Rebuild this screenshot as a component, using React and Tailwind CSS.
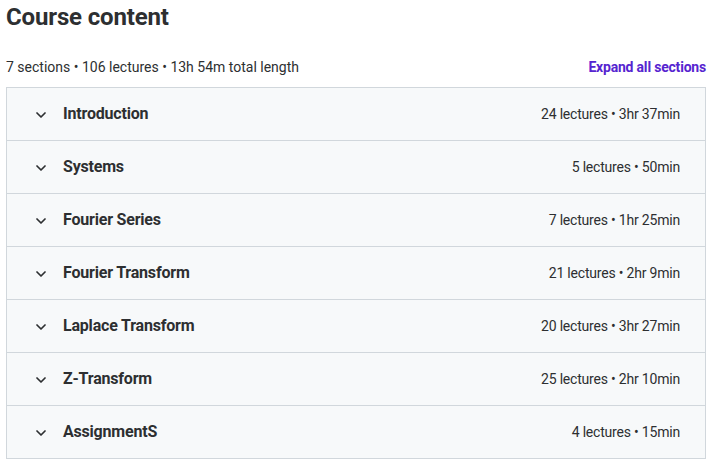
const sections = [
  { title: 'Introduction', meta: '24 lectures • 3hr 37min' },
  { title: 'Systems', meta: '5 lectures • 50min' },
  { title: 'Fourier Series', meta: '7 lectures • 1hr 25min' },
  { title: 'Fourier Transform', meta: '21 lectures • 2hr 9min' },
  { title: 'Laplace Transform', meta: '20 lectures • 3hr 27min' },
  { title: 'Z-Transform', meta: '25 lectures • 2hr 10min' },
  { title: 'AssignmentS', meta: '4 lectures • 15min' },
]

export default function App() {
  return (
    <div className="min-h-screen bg-white px-[6px] text-[#2d2f31]" style={{ fontFamily: 'Roboto, "Liberation Sans", sans-serif' }}>
      <h2 className="pt-px text-2xl leading-8 font-bold tracking-[-0.15px]">Course content</h2>

      <div className="mt-6 mb-2.5 flex items-center justify-between text-sm leading-5">
        <span>7 sections • 106 lectures • 13h 54m total length</span>
        <button className="font-bold tracking-[-0.2px] text-[#5624d0]">Expand all sections</button>
      </div>

      <div className="border border-[#d1d7dc]">
        {sections.map((s, i) => (
          <div
            key={s.title}
            className={`flex items-center justify-between bg-[#f7f9fa] pl-[29px] pr-[25px] ${
              i < sections.length - 1 ? 'h-[53px] border-b border-[#d1d7dc]' : 'h-[52px]'
            }`}
          >
            <div className="flex items-center gap-[17px]">
              <ChevronIcon />
              <span className="text-base font-bold tracking-[-0.2px]">{s.title}</span>
            </div>
            <span className="text-sm tracking-[-0.2px]">{s.meta}</span>
          </div>
        ))}
      </div>
    </div>
  )
}

function ChevronIcon() {
  return (
    <svg width="10" height="6" viewBox="0 0 10 6" fill="none" className="mt-px">
      <path d="M1 1l4 4 4-4" stroke="#2d2f31" strokeWidth="1.7" strokeLinecap="round" strokeLinejoin="round" />
    </svg>
  )
}
